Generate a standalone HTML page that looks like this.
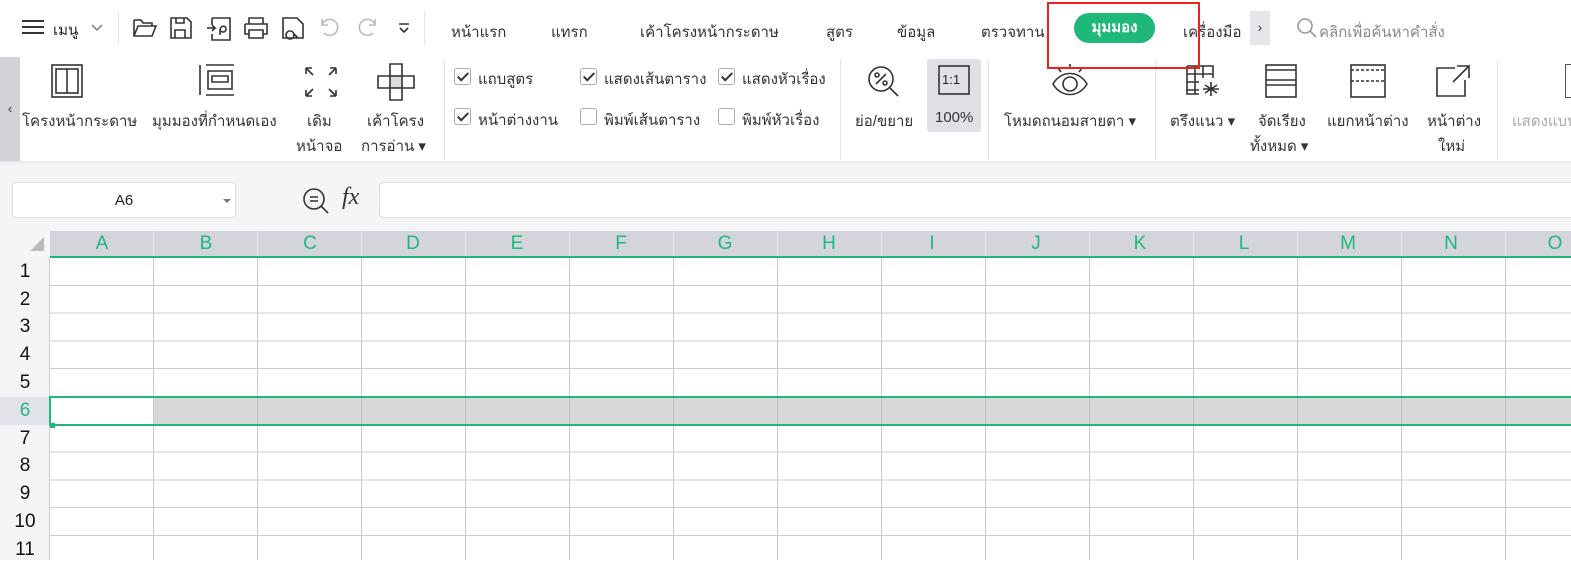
<!DOCTYPE html><html><head><meta charset="utf-8"><style>
*{margin:0;padding:0;box-sizing:border-box}
body{width:1571px;height:560px;overflow:hidden;background:#fff;font-family:"Liberation Sans","DejaVu Sans",sans-serif;color:#222;position:relative;font-size:14px}
.a{position:absolute;white-space:nowrap}
.tab{top:20px;font-size:15px;color:#333}
.lbl{font-size:15px;color:#333;text-align:center}
.cb{position:absolute;width:17px;height:17px;border:1px solid #aab;border-radius:3px;background:#fff}
.cb.on::after{content:"";position:absolute;left:5px;top:1px;width:4px;height:9px;border:solid #333;border-width:0 2px 2px 0;transform:rotate(45deg)}
.sep{position:absolute;width:1px;background:#e3e4e8}
.ch{position:absolute;top:231px;height:26px;font-size:19px;color:#1fb87a;text-align:center;line-height:26px;width:104px}
.rh{position:absolute;left:0;width:50px;height:28px;font-size:19px;text-align:center;line-height:28px;color:#111}
svg{position:absolute;fill:none;stroke:#333;stroke-width:1.6}
</style></head><body>
<!-- top bar -->
<div class="a" style="left:22px;top:20px;width:22px;height:2px;background:#333;box-shadow:0 6px 0 #333,0 12px 0 #333"></div>
<div class="a" style="left:53px;top:18px;font-size:15px">เมนู</div>
<svg style="left:90px;top:20px" width="14" height="14"><path d="M2 5l5 5 5-5" stroke="#888"/></svg>
<div class="sep" style="left:118px;top:11px;height:34px"></div>
<svg style="left:132px;top:16px" width="26" height="24"><path d="M2 4h7l2 3h9v3M2 4v16h18l4-10H6l-4 10"/></svg>
<svg style="left:169px;top:16px" width="24" height="24"><path d="M2 2h16l4 4v16H2zM6 22v-8h10v8M7 2v5h8V2"/></svg>
<svg style="left:206px;top:16px" width="26" height="26"><path d="M6 2h18v22H6v-6M6 9V2M1 12h8l-3-3M9 12l-3 3M14 15c0-6 6-6 6-2 0 4-6 4-6 0v6"/></svg>
<svg style="left:243px;top:16px" width="26" height="24"><path d="M6 8V2h14v6M2 8h22v10h-4M6 18H2V8M6 14h14v8H6z"/></svg>
<svg style="left:281px;top:16px" width="24" height="24"><path d="M16 2H2v20h20V8zM9 15a4 4 0 1 0 0.1 0M13 18l4 4"/></svg>
<svg style="left:318px;top:17px" width="24" height="22"><path d="M4 8a8 8 0 1 1 2 8M4 2v6h6" stroke="#bbb"/></svg>
<svg style="left:355px;top:17px" width="24" height="22"><path d="M20 8a8 8 0 1 0-2 8M20 2v6h-6" stroke="#bbb"/></svg>
<svg style="left:397px;top:22px" width="14" height="14"><path d="M2 2h10M3 6l4 4 4-4"/></svg>
<div class="sep" style="left:424px;top:11px;height:34px"></div>
<div class="a tab" style="left:451px">หน้าแรก</div>
<div class="a tab" style="left:551px">แทรก</div>
<div class="a tab" style="left:640px">เค้าโครงหน้ากระดาษ</div>
<div class="a tab" style="left:826px">สูตร</div>
<div class="a tab" style="left:897px">ข้อมูล</div>
<div class="a tab" style="left:981px">ตรวจทาน</div>
<div class="a" style="left:1074px;top:13px;width:81px;height:30px;border-radius:15px;background:#1fb87a;color:#fff;font-weight:bold;font-size:15px;text-align:center;line-height:30px">มุมมอง</div>
<div class="a tab" style="left:1183px">เครื่องมือ</div>
<div class="a" style="left:1250px;top:11px;width:20px;height:34px;background:#e4e6ea;color:#333;text-align:center;line-height:32px">›</div>
<svg style="left:1296px;top:17px" width="22" height="22"><circle cx="9" cy="9" r="7" stroke="#999"/><path d="M14 14l6 6" stroke="#999"/></svg>
<div class="a" style="left:1319px;top:20px;font-size:15px;color:#888">คลิกเพื่อค้นหาคำสั่ง</div>
<div class="a" style="left:1047px;top:2px;width:153px;height:67px;border:2px solid #f02020;z-index:5"></div>
<!-- ribbon -->
<div class="a" style="left:0;top:57px;width:20px;height:104px;background:#d1d3d8;color:#333;text-align:center;line-height:104px;font-size:13px">‹</div>
<div class="a" style="left:0;top:161px;width:1571px;height:4px;background:linear-gradient(#e9eaee,#f3f4f6)"></div>
<svg style="left:51px;top:64px" width="32" height="34"><rect x="1" y="1" width="30" height="32"/><rect x="5" y="5" width="22" height="24"/><path d="M16 5v24"/></svg>
<div class="a lbl" style="left:22px;top:109px">โครงหน้ากระดาษ</div>
<svg style="left:198px;top:63px" width="38" height="34"><path d="M2 2v30M8 2h28M8 32h28M10 8h24v18H10zM14 13h16v6H14z"/></svg>
<div class="a lbl" style="left:152px;top:109px">มุมมองที่กำหนดเอง</div>
<svg style="left:304px;top:66px" width="34" height="32"><path d="M2 2h6M2 2v6M2 2l7 7M32 2h-6M32 2v6M32 2l-7 7M2 30h6M2 30v-6M2 30l7-7M32 30h-6M32 30v-6M32 30l-7-7"/></svg>
<div class="a lbl" style="left:307px;top:109px">เดิม</div>
<div class="a lbl" style="left:296px;top:134px">หน้าจอ</div>
<svg style="left:376px;top:63px" width="40" height="38"><path d="M14 1h12v12h12v12H26v12H14V25H2V13h12z"/><rect x="14" y="13" width="12" height="12" fill="#ddd"/></svg>
<div class="a lbl" style="left:367px;top:109px">เค้าโครง</div>
<div class="a lbl" style="left:361px;top:134px">การอ่าน ▾</div>
<div class="sep" style="left:444px;top:60px;height:100px"></div>
<div class="cb on" style="left:454px;top:68px"></div><div class="a lbl" style="left:478px;top:67px">แถบสูตร</div>
<div class="cb on" style="left:580px;top:68px"></div><div class="a lbl" style="left:604px;top:67px">แสดงเส้นตาราง</div>
<div class="cb on" style="left:718px;top:68px"></div><div class="a lbl" style="left:742px;top:67px">แสดงหัวเรื่อง</div>
<div class="cb on" style="left:454px;top:108px"></div><div class="a lbl" style="left:478px;top:108px">หน้าต่างงาน</div>
<div class="cb" style="left:580px;top:108px"></div><div class="a lbl" style="left:604px;top:108px">พิมพ์เส้นตาราง</div>
<div class="cb" style="left:718px;top:108px"></div><div class="a lbl" style="left:742px;top:108px">พิมพ์หัวเรื่อง</div>
<div class="sep" style="left:840px;top:60px;height:100px"></div>
<svg style="left:866px;top:64px" width="36" height="34"><circle cx="15" cy="15" r="12"/><path d="M24 24l8 8M10 20l10-10"/><circle cx="11" cy="11" r="2"/><circle cx="19" cy="19" r="2"/></svg>
<div class="a lbl" style="left:855px;top:109px">ย่อ/ขยาย</div>
<div class="a" style="left:927px;top:59px;width:54px;height:73px;background:#dfe1e6;border-radius:3px"></div>
<svg style="left:938px;top:65px" width="32" height="30"><rect x="1" y="1" width="30" height="28"/></svg>
<div class="a" style="left:942px;top:72px;font-size:13px">1:1</div>
<div class="a lbl" style="left:935px;top:109px">100%</div>
<div class="sep" style="left:988px;top:60px;height:100px"></div>
<svg style="left:1050px;top:64px" width="40" height="34"><path d="M3 20c8-14 26-14 34 0c-8 14-26 14-34 0z"/><circle cx="20" cy="20" r="7"/><path d="M20 0v5M8 4l3 4M32 4l-3 4"/></svg>
<div class="a lbl" style="left:1004px;top:109px">โหมดถนอมสายตา ▾</div>
<div class="sep" style="left:1155px;top:60px;height:100px"></div>
<svg style="left:1185px;top:64px" width="38" height="34"><path d="M2 2h26v12M2 2v28h12M2 10h26M2 18h12M2 26h12M10 2v28M18 2v12M26 18v14M20 21l12 8M32 21l-12 8M18 25h16"/></svg>
<div class="a lbl" style="left:1170px;top:109px">ตรึงแนว ▾</div>
<svg style="left:1265px;top:64px" width="32" height="34"><rect x="1" y="1" width="30" height="32"/><path d="M1 6h30M1 16h30M1 21h30"/></svg>
<div class="a lbl" style="left:1258px;top:109px">จัดเรียง</div>
<div class="a lbl" style="left:1250px;top:134px">ทั้งหมด ▾</div>
<svg style="left:1350px;top:64px" width="36" height="34"><rect x="1" y="1" width="34" height="32"/><path d="M1 6h34M1 17h34" stroke-dasharray="3 2"/></svg>
<div class="a lbl" style="left:1327px;top:109px">แยกหน้าต่าง</div>
<svg style="left:1435px;top:64px" width="36" height="34"><path d="M20 4H2v28h28V16M22 2h12v12M34 2L18 18"/></svg>
<div class="a lbl" style="left:1427px;top:109px">หน้าต่าง</div>
<div class="a lbl" style="left:1438px;top:134px">ใหม่</div>
<div class="sep" style="left:1497px;top:60px;height:100px"></div>
<div class="a lbl" style="left:1512px;top:109px;color:#aaa">แสดงแบบ</div>
<div class="a" style="left:1565px;top:64px;width:6px;height:34px;border:1.5px solid #555;border-right:none"></div>
<!-- formula area -->
<div class="a" style="left:0;top:165px;width:1571px;height:66px;background:#f4f5f7"></div>
<div class="a" style="left:12px;top:182px;width:224px;height:36px;background:#fff;border:1px solid #dcdde2;border-radius:4px;text-align:center;line-height:36px;font-size:15px">A6</div>
<div class="a" style="left:223px;top:199px;border:4px solid transparent;border-top-color:#777"></div>
<svg style="left:302px;top:187px" width="28" height="28"><circle cx="12" cy="12" r="10"/><path d="M8 10h8M8 14h8M19 19l7 7"/></svg>
<div class="a" style="left:342px;top:184px;font-size:24px;font-style:italic;font-family:'Liberation Serif',serif;color:#333">fx</div>
<div class="a" style="left:379px;top:182px;width:1200px;height:36px;background:#fff;border:1px solid #dcdde2;border-radius:4px"></div>
<!-- grid -->
<div class="a" style="left:0;top:231px;width:50px;height:329px;background:#f4f5f7"></div>
<div class="a" style="left:30px;top:237px;border-style:solid;border-width:0 0 14px 14px;border-color:transparent transparent #bbb transparent"></div>
<div class="a" style="left:50px;top:231px;width:1521px;height:26px;background:#d3d5db;background-image:repeating-linear-gradient(90deg,transparent 0 103px,#e2e3e7 103px 104px)"></div>
<div class="a" style="left:50px;top:256px;width:1521px;height:2px;background:#1fb87a"></div>
<div class="a" style="left:50px;top:258px;width:1521px;height:302px;background-image:repeating-linear-gradient(90deg,transparent 0 103px,#c9ccd6 103px 104px),repeating-linear-gradient(180deg,transparent 0 26.8px,#c9ccd6 26.8px 27.8px)"></div>
<div class="a" style="left:49px;top:258px;width:1px;height:302px;background:#c9ccd6"></div>
<div class="a" style="left:0;top:397px;width:50px;height:28px;background:#e2e3e8"></div>
<div class="a" style="left:154px;top:398px;width:1417px;height:26px;background:#d8d8d8;background-image:repeating-linear-gradient(90deg,transparent 0 103px,#c0c2c8 103px 104px)"></div>
<div class="a" style="left:49px;top:396px;width:1530px;height:30px;border:2px solid #1fb87a;border-right:none"></div>
<div class="a" style="left:50px;top:423px;width:5px;height:5px;background:#1fb87a"></div>
<div class="ch" style="left:50px">A</div><div class="ch" style="left:154px">B</div><div class="ch" style="left:258px">C</div><div class="ch" style="left:361px">D</div><div class="ch" style="left:465px">E</div><div class="ch" style="left:569px">F</div><div class="ch" style="left:673px">G</div><div class="ch" style="left:777px">H</div><div class="ch" style="left:880px">I</div><div class="ch" style="left:984px">J</div><div class="ch" style="left:1088px">K</div><div class="ch" style="left:1192px">L</div><div class="ch" style="left:1296px">M</div><div class="ch" style="left:1399px">N</div><div class="ch" style="left:1503px">O</div>
<div class="rh" style="top:258px">1</div><div class="rh" style="top:286px">2</div><div class="rh" style="top:313px">3</div><div class="rh" style="top:341px">4</div><div class="rh" style="top:369px">5</div><div class="rh" style="top:397px;color:#1fb87a">6</div><div class="rh" style="top:425px">7</div><div class="rh" style="top:452px">8</div><div class="rh" style="top:480px">9</div><div class="rh" style="top:508px">10</div><div class="rh" style="top:536px">11</div>
</body></html>
